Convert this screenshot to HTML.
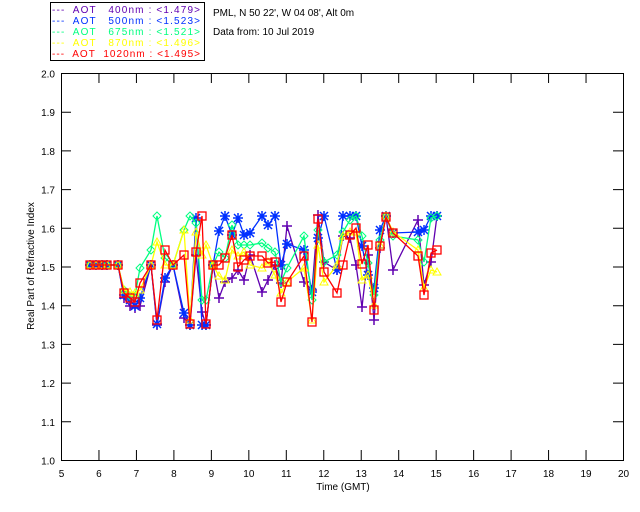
<!DOCTYPE html><html><head><style>body{margin:0;background:#fff}svg{display:block}text{font-family:"Liberation Sans",sans-serif;font-size:10px;white-space:pre}</style></head><body>
<svg id="s" width="640" height="512" xmlns="http://www.w3.org/2000/svg" xml:space="preserve">
<rect x="0" y="0" width="640" height="512" fill="#fff"/>
<rect x="50.5" y="2.5" width="154" height="58" fill="none" stroke="#000"/>
<g font-size="11">
<text x="52" y="13" fill="#6000b0" textLength="148" lengthAdjust="spacing">---  AOT   400nm : &lt;1.479&gt;</text>
<text x="52" y="24" fill="#0030ff" textLength="148" lengthAdjust="spacing">---  AOT   500nm : &lt;1.523&gt;</text>
<text x="52" y="35" fill="#00ff80" textLength="148" lengthAdjust="spacing">---  AOT   675nm : &lt;1.521&gt;</text>
<text x="52" y="46" fill="#ffff00" textLength="148" lengthAdjust="spacing">---  AOT   870nm : &lt;1.496&gt;</text>
<text x="52" y="57" fill="#ff0000" textLength="148" lengthAdjust="spacing">---  AOT  1020nm : &lt;1.495&gt;</text>
</g>
<g font-size="10">
<text x="213" y="16" fill="#000">PML, N 50 22', W 04 08', Alt 0m</text>
<text x="213" y="35" fill="#000">Data from: 10 Jul 2019</text>
<text x="343" y="490" text-anchor="middle">Time (GMT)</text>
<text transform="translate(34,266) rotate(-90)" text-anchor="middle">Real Part of Refractive Index</text>
</g>
<rect x="61.5" y="73.5" width="562" height="387" fill="none" stroke="#000"/>
<g id="ax" stroke="#000" fill="none"></g><g id="lb"></g><g id="d"></g>
</svg>
<script>
var ns="http://www.w3.org/2000/svg",ax=document.getElementById('ax'),lb=document.getElementById('lb'),d=document.getElementById('d');
function el(t,a,p){var e=document.createElementNS(ns,t);for(var k in a)e.setAttribute(k,a[k]);p.appendChild(e);return e}
var P='';
for(var h=5;h<=20;h++){var x=61.5+(h-5)*562/15;P+='M'+x+' 460V450M'+x+' 73V83';var t=el('text',{x:x,y:477,'text-anchor':'middle'},lb);t.textContent=h;}
for(var i=0;i<=10;i++){var y=460.5-i*38.7;P+='M61 '+y+'H71M623 '+y+'H613';var t=el('text',{x:55,y:y+4,'text-anchor':'end'},lb);t.textContent=(1+i/10).toFixed(1);}
el('path',{d:P},ax);
var X=[90,96,102,107,118,124,130,135,140,151,157,165,173,184,190,196,202,206,213,219,225,232,238,244,250,262,268,275,281,287,304,312,318,324,337,343,350,356,362,368,374,380,386,393,418,424,431,437];
var H=[265,265,265,265,265];
var S={
pu:{c:'#6000b0',y:H.concat([298,306,308,306,265,325,282,265,318,325,255,312,325,265,298,282,278,270,280,255,292,280,265,283,226,282,290,215,262,270,236,238,265,307,255,320,248,216,270,220,285,262,216])},
bl:{c:'#0030ff',y:H.concat([295,300,306,298,265,324,278,265,313,325,218,325,325,265,231,216,235,218,235,233,216,225,216,265,244,250,292,238,216,270,216,216,216,246,275,288,230,216,233,232,230,216,216])},
gr:{c:'#00ff80',y:H.concat([290,296,296,268,250,216,258,265,230,216,223,300,300,265,252,258,225,245,245,245,243,248,252,282,268,236,300,230,262,255,232,220,216,236,263,295,240,216,236,240,262,218,216])},
ye:{c:'#ffff00',y:H.concat([290,292,293,290,265,242,265,265,230,320,232,255,245,265,276,280,250,256,252,265,268,262,275,293,282,268,320,245,282,265,236,232,232,280,275,305,245,216,232,250,288,270,272])},
re:{c:'#ff0000',y:H.concat([293,298,302,283,265,320,250,265,255,324,252,216,324,265,265,258,235,267,260,256,256,263,262,302,282,256,322,219,272,293,265,235,228,264,245,310,246,217,233,256,295,253,250])}};
['pu','bl','gr','ye','re'].forEach(function(k){var s=S[k],pts=X.map(function(x,i){return x+','+s.y[i]}).join(' ');
el('polyline',{points:pts,fill:'none',stroke:s.c,'stroke-width':1.3},d);
X.forEach(function(x,i){var y=s.y[i],a={fill:'none',stroke:s.c};
if(k=='re')el('rect',Object.assign(a,{x:x-4,y:y-4,width:8,height:8,'stroke-width':1.3}),d);
else if(k=='ye')el('path',Object.assign(a,{d:'M'+x+' '+(y-4)+'L'+(x+4)+' '+(y+3)+'L'+(x-4)+' '+(y+3)+'Z'}),d);
else if(k=='gr')el('path',Object.assign(a,{d:'M'+x+' '+(y-4)+'L'+(x+4)+' '+y+'L'+x+' '+(y+4)+'L'+(x-4)+' '+y+'Z'}),d);
else if(k=='bl')el('path',Object.assign(a,{d:'M'+(x-5)+' '+y+'H'+(x+5)+'M'+x+' '+(y-5)+'V'+(y+5)+'M'+(x-4)+' '+(y-4)+'L'+(x+4)+' '+(y+4)+'M'+(x+4)+' '+(y-4)+'L'+(x-4)+' '+(y+4),'stroke-width':1.5}),d);
else el('path',Object.assign(a,{d:'M'+(x-5)+' '+y+'H'+(x+5)+'M'+x+' '+(y-5)+'V'+(y+5),'stroke-width':1.5}),d);});});
</script></body></html>
